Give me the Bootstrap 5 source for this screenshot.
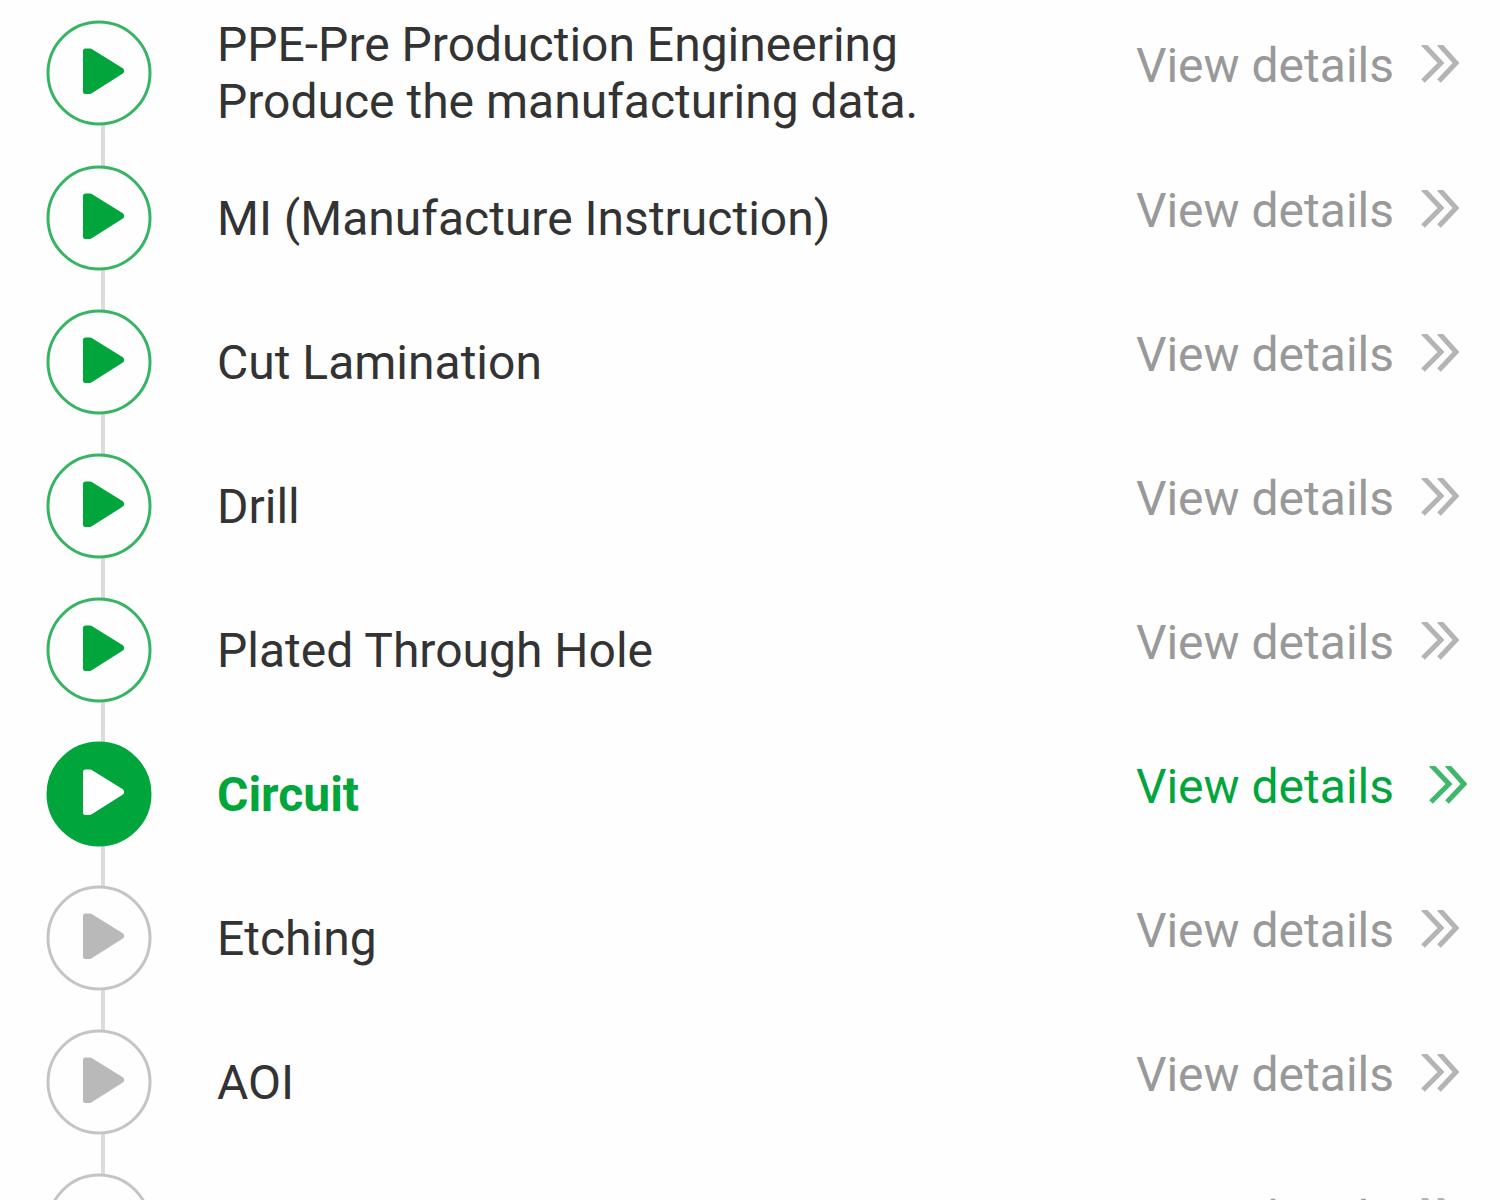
<!DOCTYPE html>
<html lang="en">
<head>
<meta charset="utf-8">
<meta name="viewport" content="width=device-width, initial-scale=1">
<title>Production progress</title>
<link href="https://cdn.jsdelivr.net/npm/bootstrap@5.3.0/dist/css/bootstrap.min.css" rel="stylesheet">
<style>
  body { font-family: Roboto, "Liberation Sans", sans-serif; font-size: 48px; line-height: 57px; color: #333; background: #fefefe; }
  .progress-steps { padding: 0 41px 0 46px; }
  .step { min-height: 144px; gap: 65px; --tone: #00a63c; --ring: #35b562; --disc: #fefefe; --arrow: #00a63c; }
  .step:first-child { min-height: 146px; }
  .step.waiting { --ring: #c4c4c4; --arrow: #b9b9b9; }
  .step.active { --ring: #00a63c; --disc: #00a63c; --arrow: #fff; }
  /* vertical rail running behind the markers */
  .rail { width: 106px; }
  .rail::before { content: ""; position: absolute; top: 0; bottom: 0; left: 55px; width: 4px; background: #dcdcdc; }
  .step:first-child .rail::before { top: 50%; }
  .marker { width: 106px; height: 106px; }
  .marker-ring { fill: var(--disc); stroke: var(--ring); stroke-width: 3; }
  .marker-arrow { fill: var(--arrow); stroke: var(--arrow); stroke-width: 5; stroke-linejoin: round; }
  .active .step-title, .active .details { color: var(--tone); }
  .details { color: #999; gap: 27px; padding-bottom: 16px; }
  .details:hover { color: #00a63c; }
  .chevrons { width: 38px; height: 40px; fill: none; stroke: #b4b4b4; stroke-width: 5; }
  .active .chevrons { stroke: #40b86b; margin-left: 8px; margin-right: -8px; }
</style>
<script src="https://cdn.jsdelivr.net/npm/bootstrap@5.3.0/dist/js/bootstrap.bundle.min.js" defer></script>
</head>
<body>
<svg class="d-none" aria-hidden="true">
  <symbol id="play" viewBox="0 0 106 106"><circle class="marker-ring" cx="53" cy="53" r="51"/><path class="marker-arrow" d="M39.500 31H44L75.500 50.500V51.500L44 71.500H39.500Z"/></symbol>
  <symbol id="more" viewBox="0 0 38 40"><path d="M2 -1L20 18L2 36M18 -1L35 18L18 36"/></symbol>
</svg>
<main class="vh-100 overflow-hidden">
  <ol class="progress-steps list-unstyled m-0">
    <li class="step d-flex align-items-center">
      <div class="rail position-relative align-self-stretch d-flex align-items-center flex-shrink-0"><svg class="marker position-relative" aria-hidden="true"><use href="#play"/></svg></div>
      <div class="step-title flex-grow-1">PPE-Pre Production Engineering<br>Produce the manufacturing data.</div>
      <a class="details d-flex align-items-center flex-shrink-0 text-decoration-none" href="#">View details<svg class="chevrons" aria-hidden="true"><use href="#more"/></svg></a>
    </li>
    <li class="step d-flex align-items-center">
      <div class="rail position-relative align-self-stretch d-flex align-items-center flex-shrink-0"><svg class="marker position-relative" aria-hidden="true"><use href="#play"/></svg></div>
      <div class="step-title flex-grow-1">MI (Manufacture Instruction)</div>
      <a class="details d-flex align-items-center flex-shrink-0 text-decoration-none" href="#">View details<svg class="chevrons" aria-hidden="true"><use href="#more"/></svg></a>
    </li>
    <li class="step d-flex align-items-center">
      <div class="rail position-relative align-self-stretch d-flex align-items-center flex-shrink-0"><svg class="marker position-relative" aria-hidden="true"><use href="#play"/></svg></div>
      <div class="step-title flex-grow-1">Cut Lamination</div>
      <a class="details d-flex align-items-center flex-shrink-0 text-decoration-none" href="#">View details<svg class="chevrons" aria-hidden="true"><use href="#more"/></svg></a>
    </li>
    <li class="step d-flex align-items-center">
      <div class="rail position-relative align-self-stretch d-flex align-items-center flex-shrink-0"><svg class="marker position-relative" aria-hidden="true"><use href="#play"/></svg></div>
      <div class="step-title flex-grow-1">Drill</div>
      <a class="details d-flex align-items-center flex-shrink-0 text-decoration-none" href="#">View details<svg class="chevrons" aria-hidden="true"><use href="#more"/></svg></a>
    </li>
    <li class="step d-flex align-items-center">
      <div class="rail position-relative align-self-stretch d-flex align-items-center flex-shrink-0"><svg class="marker position-relative" aria-hidden="true"><use href="#play"/></svg></div>
      <div class="step-title flex-grow-1">Plated Through Hole</div>
      <a class="details d-flex align-items-center flex-shrink-0 text-decoration-none" href="#">View details<svg class="chevrons" aria-hidden="true"><use href="#more"/></svg></a>
    </li>
    <li class="step active d-flex align-items-center" aria-current="step">
      <div class="rail position-relative align-self-stretch d-flex align-items-center flex-shrink-0"><svg class="marker position-relative" aria-hidden="true"><use href="#play"/></svg></div>
      <div class="step-title flex-grow-1 fw-bold">Circuit</div>
      <a class="details d-flex align-items-center flex-shrink-0 text-decoration-none" href="#">View details<svg class="chevrons" aria-hidden="true"><use href="#more"/></svg></a>
    </li>
    <li class="step waiting d-flex align-items-center">
      <div class="rail position-relative align-self-stretch d-flex align-items-center flex-shrink-0"><svg class="marker position-relative" aria-hidden="true"><use href="#play"/></svg></div>
      <div class="step-title flex-grow-1">Etching</div>
      <a class="details d-flex align-items-center flex-shrink-0 text-decoration-none" href="#">View details<svg class="chevrons" aria-hidden="true"><use href="#more"/></svg></a>
    </li>
    <li class="step waiting d-flex align-items-center">
      <div class="rail position-relative align-self-stretch d-flex align-items-center flex-shrink-0"><svg class="marker position-relative" aria-hidden="true"><use href="#play"/></svg></div>
      <div class="step-title flex-grow-1">AOI</div>
      <a class="details d-flex align-items-center flex-shrink-0 text-decoration-none" href="#">View details<svg class="chevrons" aria-hidden="true"><use href="#more"/></svg></a>
    </li>
    <li class="step waiting d-flex align-items-center">
      <div class="rail position-relative align-self-stretch d-flex align-items-center flex-shrink-0"><svg class="marker position-relative" aria-hidden="true"><use href="#play"/></svg></div>
      <div class="step-title flex-grow-1"></div>
      <a class="details d-flex align-items-center flex-shrink-0 text-decoration-none" href="#">View details<svg class="chevrons" aria-hidden="true"><use href="#more"/></svg></a>
    </li>
  </ol>
</main>
</body>
</html>
